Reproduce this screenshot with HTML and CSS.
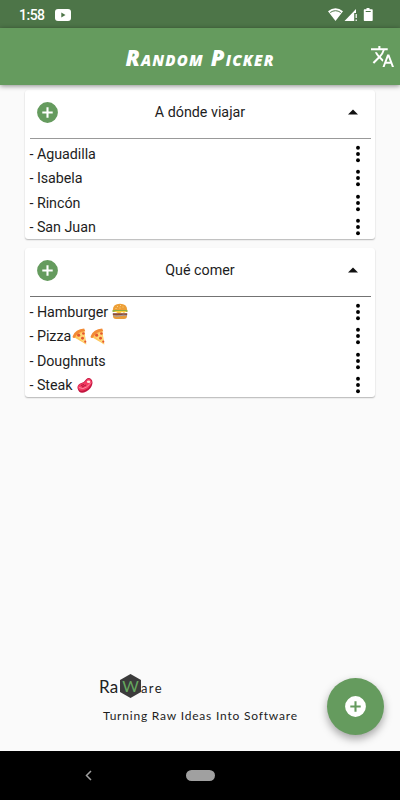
FILE: index.html
```html
<!DOCTYPE html>
<html lang="es">
<head>
<meta charset="utf-8">
<title>Random Picker</title>
<link rel="stylesheet" href="styles.css">
</head>
<body>
<svg class="defs" width="0" height="0" aria-hidden="true">
  <symbol id="add" viewBox="0 0 24 24"><path d="M12 2a10 10 0 1 0 0 20 10 10 0 0 0 0-20zm5 11h-4v4h-2v-4H7v-2h4V7h2v4h4z"/></symbol>
  <symbol id="dots" viewBox="0 0 6 18"><circle cx="3" cy="2.8" r="1.95"/><circle cx="3" cy="9" r="1.95"/><circle cx="3" cy="15.200" r="1.95"/></symbol>
  <symbol id="up" viewBox="0 0 10 6"><path d="M0 5.500 5 .5l5 5z"/></symbol>
  <symbol id="pizza" viewBox="1 1 13.500 15.500">
    <path d="M2 9 12 2.500 14 16z" fill="#ffc65c"/>
    <path d="M1.500 8.500Q4 2 12 1.500L13 4Q6 4.500 3.500 10Q1 10.500 1.500 8.500z" fill="#f28b35"/>
    <path d="m5 8 7-3.500 1.500 11.500z" fill="#ffd778"/>
    <circle cx="7" cy="7.500" r="1.400" fill="#e4572e"/><circle cx="11.300" cy="6" r="1.200" fill="#e4572e"/><circle cx="10.500" cy="10.300" r="1.300" fill="#e4572e"/><circle cx="13" cy="13.500" r="1" fill="#e4572e"/>
  </symbol>
</svg>
<div class="screen">
  <div class="status">
    <span class="clock">1:58</span>
    <svg class="tube" viewBox="0 0 16 12"><rect width="16" height="12" rx="3" fill="#fff"/><path d="M6.300 3.500v5L10.500 6z" fill="#4d7548"/></svg>
    <svg class="system" viewBox="0 0 48 14" fill="#fff">
      <path d="M0 3.200Q7.500-2.500 15 3.200L7.500 13z"/><path d="M2.200 4.500Q7.500.9 12.800 4.500" fill="none" stroke="#4d7548" stroke-width="1"/>
      <path d="M16.500 13 28 1v4h-1.800v8z"/><path d="M28.200 6v4M28.200 11.500V13" stroke="#fff" stroke-width="1.200"/>
      <path d="M38.500 0h3v1.200H44q.7 0 .7.700v10.400q0 .7-.7.700h-7.500q-.7 0-.7-.7V1.900q0-.7.700-.7h2z"/><path d="M37.700 3.500h5" stroke="#4d7548" stroke-width="1"/>
    </svg>
  </div>
  <header class="appbar">
    <h1 class="title">Random Picker</h1>
    <svg class="translate" viewBox="1 2 22 20" fill="#fff"><path d="M12.870 15.070l-2.540-2.510.03-.03A17.520 17.520 0 0 0 14.070 6H17V4h-7V2H8v2H1v1.990h11.170C11.500 7.920 10.440 9.750 9 11.350 8.070 10.320 7.300 9.190 6.690 8h-2c.73 1.630 1.730 3.170 2.980 4.560l-5.090 5.020L4 19l5-5 3.110 3.110.76-2.040zM18.500 10h-2L12 22h2l1.120-3h4.750L21 22h2l-4.500-12zm-2.620 7l1.620-4.330L19.120 17h-3.240z"/></svg>
  </header>
  <main class="lists">
    <section class="card">
      <div class="head"><svg class="add"><use href="#add"/></svg><h2>A dónde viajar</h2><svg class="up"><use href="#up"/></svg></div>
      <ul>
        <li><span>- Aguadilla</span><svg class="dots"><use href="#dots"/></svg></li>
        <li><span>- Isabela</span><svg class="dots"><use href="#dots"/></svg></li>
        <li><span>- Rincón</span><svg class="dots"><use href="#dots"/></svg></li>
        <li><span>- San Juan</span><svg class="dots"><use href="#dots"/></svg></li>
      </ul>
    </section>
    <section class="card dark-rule">
      <div class="head"><svg class="add"><use href="#add"/></svg><h2>Qué comer</h2><svg class="up"><use href="#up"/></svg></div>
      <ul>
        <li><span>- Hamburger</span>
          <svg class="food burger" viewBox="0 0 16 17"><path d="M.8 7Q1 .8 8 .8T15.200 7z" fill="#ed9f37"/><path d="M1 11h14v2q0 3-3 3H4q-3 0-3-3z" fill="#e89b3a"/><path d="M.5 7h15v2H.5z" fill="#8fae3f"/><path d="M1 8h14l-3 2-2-1-3 2-3-2z" fill="#ffca3c"/><path d="M.8 10.200h14.400v2H.8z" fill="#8b4b38"/><path d="M1.500 12.500q3 1.500 6.500.3t6.500-.3" stroke="#9b9dae" fill="none"/><path d="M5 3.500h1M8 2.500h1M10.500 4h1M7.500 5h1M3.500 5.500h1" stroke="#ffe3a0" stroke-width=".8"/></svg>
          <svg class="dots"><use href="#dots"/></svg></li>
        <li><span>- Pizza</span><svg class="food slice"><use href="#pizza"/></svg><svg class="food slice second"><use href="#pizza"/></svg><svg class="dots"><use href="#dots"/></svg></li>
        <li><span>- Doughnuts</span><svg class="dots"><use href="#dots"/></svg></li>
        <li><span>- Steak</span>
          <svg class="food steak" viewBox="0 0 16 16"><path d="M.6 11Q0 7 4.500 5.500 7.500 4.500 9 2q2.500-2.500 5-.5 2 2 1.300 5-1 5-6 7.500-7 3.500-8.700-3z" fill="#c2153f"/><path d="M.8 9.500Q1 7 4.800 6 8 5 9.500 2.500q2-2 4-.5 2 2 .5 5-2 4-6 5.500-6.500 2.500-7.200-3z" fill="#f23b62"/><path d="M2 10q4 2.500 7.500-.5T14 5" stroke="#ff8ca0" fill="none"/><ellipse cx="11.600" cy="4.300" rx="1.700" ry="1.300" fill="#ffe8df"/><path d="m4 8 3-1M5 9.500l4-2" stroke="#b5173a"/></svg>
          <svg class="dots"><use href="#dots"/></svg></li>
      </ul>
    </section>
  </main>
  <footer class="brand">
    <div class="logo"><span class="ra">Ra</span><span class="hex">W</span><span class="are">are</span></div>
    <p class="tagline">Turning Raw Ideas Into Software</p>
  </footer>
  <button class="fab" aria-label="+"><svg><use href="#add"/></svg></button>
  <nav class="nav">
    <svg class="back" viewBox="0 0 7 11"><path d="M6 1 1.500 5.500 6 10" fill="none" stroke="#a0a0a0" stroke-width="1.500"/></svg>
    <span class="pill"></span>
  </nav>
</div>
</body>
</html>
```
FILE: styles.css
```css
* { box-sizing: border-box; }
body { margin: 0; background: #fafafa; font-family: Roboto, "Liberation Sans", sans-serif; color: #1d1d1d; }
svg { display: block; flex: none; }
.defs { position: absolute; }
h1, h2, p, ul { margin: 0; padding: 0; font-weight: 400; }
.screen { position: relative; display: flex; flex-direction: column; width: 400px; height: 800px; overflow: hidden; }
.status { display: flex; align-items: center; height: 28px; flex: none; padding: 1px 24px 0 19px; background: #4d7548; color: #fff; }
.clock { width: 36px; font-size: 14px; font-weight: 500; line-height: 28px; letter-spacing: -.5px; }
.tube { width: 16px; height: 12px; }
.system { width: 48px; height: 14px; margin-left: auto; }
.appbar { display: grid; grid-template-columns: 29px 1fr 29px; align-items: center; height: 57px; flex: none; background: #659b5e; box-shadow: 0 1px 5px rgba(0,0,0,.45); z-index: 1; }
.title { grid-column: 2; justify-self: center; color: #fff; font-family: "Open Sans", sans-serif; font-size: 22px; line-height: 24px; font-weight: 800; font-style: italic; font-variant-caps: small-caps; letter-spacing: 1.2px; white-space: nowrap; }
.translate { width: 23px; height: 21px; }
.lists { display: flex; flex-direction: column; gap: 9px; padding: 5px 25px 0; flex: 1; }
.card { height: 149px; padding: 0 4.5px; background: #fff; border-radius: 3px; box-shadow: 0 1px 1.5px rgba(0,0,0,.28); }
.head { display: grid; grid-template-columns: 34px 1fr 34px; align-items: center; height: 48.5px; padding-bottom: 4px; border-bottom: 1.5px solid #999; }
.dark-rule .head { border-color: #737373; }
.add { width: 25px; height: 25px; margin: 1px 0 0 5px; fill: #659b5e; }
.head h2 { text-align: center; font-size: 14.3px; line-height: 20px; }
.up { width: 10px; height: 6px; margin-left: 11.5px; fill: #111; }
ul { list-style: none; padding-top: 3px; }
li { display: flex; align-items: center; height: 24.5px; font-size: 14.3px; letter-spacing: -.04px; white-space: pre; }
.dots { width: 6px; height: 18px; margin-left: auto; margin-right: 9.6px; fill: #000; }
.food { width: 16px; height: 17px; }
.burger, .steak { margin-left: 4px; }
.slice { width: 15px; margin-left: 1px; }
.second { margin-left: 3px; }
.brand { height: 79px; flex: none; padding-left: 99px; }
.logo { display: flex; align-items: center; height: 28px; font-family: Lato, sans-serif; color: #222; }
.ra { width: 21px; font-size: 17px; letter-spacing: .3px; }
.hex { width: 21px; height: 24px; background: #3b3b3b; color: #65a85e; clip-path: polygon(50% 0, 100% 25%, 100% 75%, 50% 100%, 0 75%, 0 25%); text-align: center; font-size: 16px; line-height: 24px; }
.are { font-size: 13px; letter-spacing: 1.4px; padding-top: 3px; }
.tagline { margin: 7px 0 0 4px; font-family: Lato, sans-serif; font-size: 12px; line-height: 18px; letter-spacing: .8px; white-space: nowrap; }
.fab { position: absolute; left: 327px; top: 678px; width: 57px; height: 57px; display: grid; place-items: center; padding: 0; border: 0; border-radius: 50%; background: #659b5e; box-shadow: 0 4px 8px rgba(0,0,0,.35); }
.fab svg { width: 25px; height: 25px; fill: #fff; }
.nav { display: grid; grid-template-columns: 186px 1fr; align-items: center; height: 49px; flex: none; background: #000; }
.back { width: 7px; height: 11px; margin-left: 85px; }
.pill { width: 29px; height: 11px; border-radius: 6px; background: #a0a0a0; }
```
